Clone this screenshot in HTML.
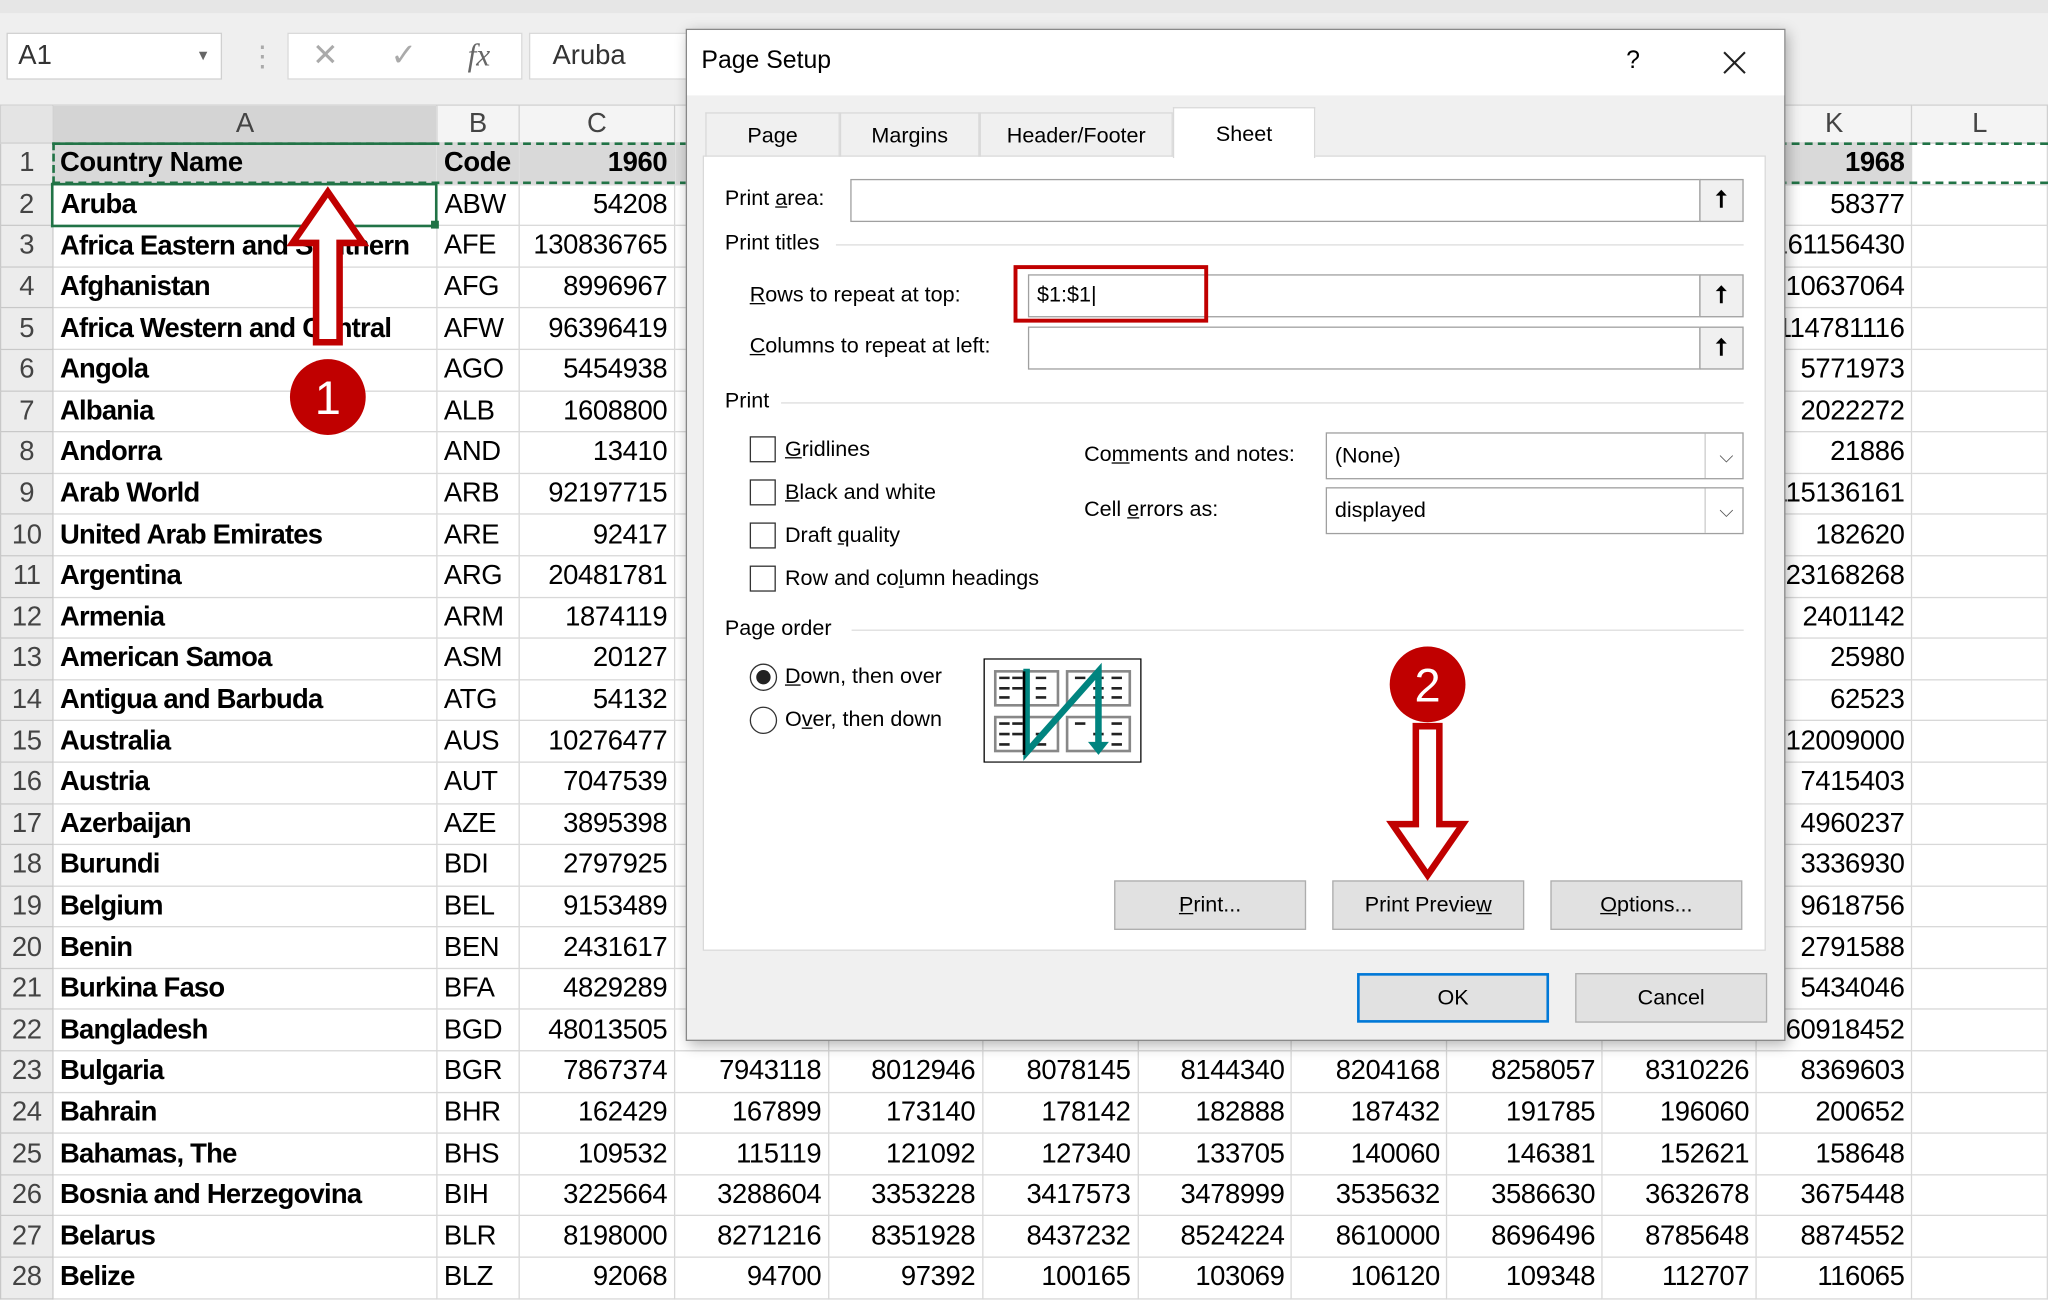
<!DOCTYPE html>
<html><head><meta charset="utf-8"><style>
*{box-sizing:border-box;margin:0;padding:0}
body{width:2048px;height:1305px;overflow:hidden;background:#fff;font-family:"Liberation Sans",sans-serif}
#w{position:absolute;left:0;top:0;width:1568px;height:999px;transform:scale(1.30612);transform-origin:0 0;overflow:hidden;background:#fff}
.a{position:absolute}
table{position:absolute;left:0;top:80px;border-collapse:collapse;table-layout:fixed;font-size:21px;color:#000;letter-spacing:-0.3px}
td{border:1px solid #d8d8d8;height:31.6px;padding:0 5px;white-space:nowrap;overflow:hidden}
td.r{text-align:right}
td.h{background:#ececec;color:#444;text-align:center;padding:0;border-color:#c8c8c8}
tr.ch td{height:29px;background:#f4f4f4;color:#444;text-align:center;font-size:21px;border-color:#d0d0d0}
td.n{font-weight:bold;overflow:visible;letter-spacing:-0.6px}
.d{font-family:"Liberation Sans",sans-serif;font-size:16.5px;color:#000}
.inp{position:absolute;background:#fff;border:1px solid #a0a0a0}
.ub{position:absolute;width:34px;background:#f0f0f0;border:1px solid #a0a0a0;text-align:center;font-weight:bold;font-size:18px}
.cb{position:absolute;left:574px;width:20px;height:20px;border:1px solid #333;background:#fff}
.btn{position:absolute;height:38px;width:147px;background:#e1e1e1;border:1px solid #adadad;text-align:center;line-height:36px}
.sel{position:absolute;left:1015px;width:320px;height:36px;background:#fff;border:1px solid #a0a0a0;padding-left:6px;line-height:34px}
.sel:after{content:"";position:absolute;right:0;top:0;width:28px;height:34px;border-left:1px solid #ccc}
.sec{position:absolute;left:555px;right:16px;height:1px}
u{text-decoration:underline}
</style></head><body><div id="w">
<div class="a" style="left:0;top:0;width:1568px;height:80px;background:#efefef"></div>
<div class="a" style="left:0;top:0;width:1568px;height:10px;background:#e6e6e6"></div>
<div class="a" style="left:5px;top:25px;width:165px;height:36px;background:#fff;border:1px solid #d0d0d0;font-size:21px;line-height:34px;padding-left:8px;color:#333">A1<span style="position:absolute;right:8px;font-size:11px;color:#666">▼</span></div>
<div class="a" style="left:190px;top:30px;color:#aaa;font-size:22px">⋮</div>
<div class="a" style="left:220px;top:25px;width:180px;height:36px;background:#fff;border:1px solid #d8d8d8;font-size:24px;line-height:34px;color:#aaa"><span style="position:absolute;left:18px">✕</span><span style="position:absolute;left:78px">✓</span><span style="position:absolute;left:137px;font-family:'Liberation Serif',serif;font-style:italic;color:#666">fx</span></div>
<div class="a" style="left:405px;top:25px;width:130px;height:36px;background:#fff;border:1px solid #d8d8d8;font-size:21px;line-height:34px;padding-left:17px;color:#333">Aruba</div>
<table>
<colgroup><col style="width:40px"><col style="width:294px"><col style="width:63px"><col style="width:119px"><col style="width:118px"><col style="width:118px"><col style="width:119px"><col style="width:118px"><col style="width:119px"><col style="width:119px"><col style="width:118px"><col style="width:119px"><col style="width:104px"></colgroup>
<tr class="ch"><td style="background:#e4e4e4"></td><td style="background:#d4d4d4;border-bottom:2px solid #217346">A</td><td>B</td><td>C</td><td>D</td><td>E</td><td>F</td><td>G</td><td>H</td><td>I</td><td>J</td><td>K</td><td>L</td></tr>
<tr style="background:#d9d9d9;font-weight:bold"><td class="h" style="font-weight:normal">1</td><td>Country Name</td><td>Code</td><td class="r">1960</td><td></td><td></td><td></td><td></td><td></td><td></td><td></td><td class="r">1968</td><td style="background:#fff"></td></tr>
<tr><td class="h">2</td><td class="n" style="border:2px solid #217346">Aruba</td><td>ABW</td><td class="r">54208</td><td></td><td></td><td></td><td></td><td></td><td></td><td></td><td class="r">58377</td><td></td></tr>
<tr><td class="h">3</td><td class="n">Africa Eastern and Southern</td><td>AFE</td><td class="r">130836765</td><td></td><td></td><td></td><td></td><td></td><td></td><td></td><td class="r">161156430</td><td></td></tr>
<tr><td class="h">4</td><td class="n">Afghanistan</td><td>AFG</td><td class="r">8996967</td><td></td><td></td><td></td><td></td><td></td><td></td><td></td><td class="r">10637064</td><td></td></tr>
<tr><td class="h">5</td><td class="n">Africa Western and Central</td><td>AFW</td><td class="r">96396419</td><td></td><td></td><td></td><td></td><td></td><td></td><td></td><td class="r">114781116</td><td></td></tr>
<tr><td class="h">6</td><td class="n">Angola</td><td>AGO</td><td class="r">5454938</td><td></td><td></td><td></td><td></td><td></td><td></td><td></td><td class="r">5771973</td><td></td></tr>
<tr><td class="h">7</td><td class="n">Albania</td><td>ALB</td><td class="r">1608800</td><td></td><td></td><td></td><td></td><td></td><td></td><td></td><td class="r">2022272</td><td></td></tr>
<tr><td class="h">8</td><td class="n">Andorra</td><td>AND</td><td class="r">13410</td><td></td><td></td><td></td><td></td><td></td><td></td><td></td><td class="r">21886</td><td></td></tr>
<tr><td class="h">9</td><td class="n">Arab World</td><td>ARB</td><td class="r">92197715</td><td></td><td></td><td></td><td></td><td></td><td></td><td></td><td class="r">115136161</td><td></td></tr>
<tr><td class="h">10</td><td class="n">United Arab Emirates</td><td>ARE</td><td class="r">92417</td><td></td><td></td><td></td><td></td><td></td><td></td><td></td><td class="r">182620</td><td></td></tr>
<tr><td class="h">11</td><td class="n">Argentina</td><td>ARG</td><td class="r">20481781</td><td></td><td></td><td></td><td></td><td></td><td></td><td></td><td class="r">23168268</td><td></td></tr>
<tr><td class="h">12</td><td class="n">Armenia</td><td>ARM</td><td class="r">1874119</td><td></td><td></td><td></td><td></td><td></td><td></td><td></td><td class="r">2401142</td><td></td></tr>
<tr><td class="h">13</td><td class="n">American Samoa</td><td>ASM</td><td class="r">20127</td><td></td><td></td><td></td><td></td><td></td><td></td><td></td><td class="r">25980</td><td></td></tr>
<tr><td class="h">14</td><td class="n">Antigua and Barbuda</td><td>ATG</td><td class="r">54132</td><td></td><td></td><td></td><td></td><td></td><td></td><td></td><td class="r">62523</td><td></td></tr>
<tr><td class="h">15</td><td class="n">Australia</td><td>AUS</td><td class="r">10276477</td><td></td><td></td><td></td><td></td><td></td><td></td><td></td><td class="r">12009000</td><td></td></tr>
<tr><td class="h">16</td><td class="n">Austria</td><td>AUT</td><td class="r">7047539</td><td></td><td></td><td></td><td></td><td></td><td></td><td></td><td class="r">7415403</td><td></td></tr>
<tr><td class="h">17</td><td class="n">Azerbaijan</td><td>AZE</td><td class="r">3895398</td><td></td><td></td><td></td><td></td><td></td><td></td><td></td><td class="r">4960237</td><td></td></tr>
<tr><td class="h">18</td><td class="n">Burundi</td><td>BDI</td><td class="r">2797925</td><td></td><td></td><td></td><td></td><td></td><td></td><td></td><td class="r">3336930</td><td></td></tr>
<tr><td class="h">19</td><td class="n">Belgium</td><td>BEL</td><td class="r">9153489</td><td></td><td></td><td></td><td></td><td></td><td></td><td></td><td class="r">9618756</td><td></td></tr>
<tr><td class="h">20</td><td class="n">Benin</td><td>BEN</td><td class="r">2431617</td><td></td><td></td><td></td><td></td><td></td><td></td><td></td><td class="r">2791588</td><td></td></tr>
<tr><td class="h">21</td><td class="n">Burkina Faso</td><td>BFA</td><td class="r">4829289</td><td></td><td></td><td></td><td></td><td></td><td></td><td></td><td class="r">5434046</td><td></td></tr>
<tr><td class="h">22</td><td class="n">Bangladesh</td><td>BGD</td><td class="r">48013505</td><td></td><td></td><td></td><td></td><td></td><td></td><td></td><td class="r">160918452</td><td></td></tr>
<tr><td class="h">23</td><td class="n">Bulgaria</td><td>BGR</td><td class="r">7867374</td><td class="r">7943118</td><td class="r">8012946</td><td class="r">8078145</td><td class="r">8144340</td><td class="r">8204168</td><td class="r">8258057</td><td class="r">8310226</td><td class="r">8369603</td><td></td></tr>
<tr><td class="h">24</td><td class="n">Bahrain</td><td>BHR</td><td class="r">162429</td><td class="r">167899</td><td class="r">173140</td><td class="r">178142</td><td class="r">182888</td><td class="r">187432</td><td class="r">191785</td><td class="r">196060</td><td class="r">200652</td><td></td></tr>
<tr><td class="h">25</td><td class="n">Bahamas, The</td><td>BHS</td><td class="r">109532</td><td class="r">115119</td><td class="r">121092</td><td class="r">127340</td><td class="r">133705</td><td class="r">140060</td><td class="r">146381</td><td class="r">152621</td><td class="r">158648</td><td></td></tr>
<tr><td class="h">26</td><td class="n">Bosnia and Herzegovina</td><td>BIH</td><td class="r">3225664</td><td class="r">3288604</td><td class="r">3353228</td><td class="r">3417573</td><td class="r">3478999</td><td class="r">3535632</td><td class="r">3586630</td><td class="r">3632678</td><td class="r">3675448</td><td></td></tr>
<tr><td class="h">27</td><td class="n">Belarus</td><td>BLR</td><td class="r">8198000</td><td class="r">8271216</td><td class="r">8351928</td><td class="r">8437232</td><td class="r">8524224</td><td class="r">8610000</td><td class="r">8696496</td><td class="r">8785648</td><td class="r">8874552</td><td></td></tr>
<tr><td class="h">28</td><td class="n">Belize</td><td>BLZ</td><td class="r">92068</td><td class="r">94700</td><td class="r">97392</td><td class="r">100165</td><td class="r">103069</td><td class="r">106120</td><td class="r">109348</td><td class="r">112707</td><td class="r">116065</td><td></td></tr>
</table>
<div class="a" style="left:40px;top:109px;width:1528px;height:32px;border-top:2px dashed #217346;border-bottom:2px dashed #217346;border-left:2px dashed #217346"></div>
<div class="a" style="left:330px;top:169px;width:6px;height:6px;background:#217346"></div>

<div class="a d" style="left:525px;top:22px;width:842px;height:775px;background:#f0f0f0;border:1px solid #888;box-shadow:2px 3px 10px rgba(0,0,0,.3)">
 <div class="a" style="left:0;top:0;width:840px;height:50px;background:#fff"></div>
 <div class="a" style="left:11px;top:13px;font-size:19px">Page Setup</div>
 <div class="a" style="left:719px;top:13px;font-size:19px">?</div>
 <svg class="a" style="left:792px;top:15px" width="20" height="20"><path d="M2 2L18 18M18 2L2 18" stroke="#222" stroke-width="1.6"/></svg>
</div>
<div class="a d" style="left:538px;top:119px;width:814px;height:609px;background:#fff;border:1px solid #d9d9d9"></div>
<div class="a d" style="left:540px;top:86px;width:103px;height:34px;border:1px solid #d9d9d9;border-bottom:none;text-align:center;line-height:34px">Page</div>
<div class="a d" style="left:643px;top:86px;width:107px;height:34px;border:1px solid #d9d9d9;border-bottom:none;text-align:center;line-height:34px">Margins</div>
<div class="a d" style="left:750px;top:86px;width:148px;height:34px;border:1px solid #d9d9d9;border-bottom:none;text-align:center;line-height:34px">Header/Footer</div>
<div class="a d" style="left:898px;top:82px;width:109px;height:39px;background:#fff;border:1px solid #d9d9d9;border-bottom:none;text-align:center;line-height:40px">Sheet</div>

<div class="a d" style="left:555px;top:143px">Print <u>a</u>rea:</div>
<div class="inp" style="left:651px;top:137px;width:651px;height:33px"></div>
<div class="ub" style="left:1301px;top:137px;height:33px;line-height:31px">⭡</div>
<div class="a d" style="left:555px;top:177px">Print titles</div>
<div class="sec" style="left:640px;width:695px;top:187px;background:#ddd"></div>
<div class="a d" style="left:574px;top:217px"><u>R</u>ows to repeat at top:</div>
<div class="inp" style="left:787px;top:210px;width:515px;height:33px;padding-left:6px;line-height:31px" ><span class="d">$1:$1|</span></div>
<div class="ub" style="left:1301px;top:210px;height:33px;line-height:31px">⭡</div>
<div class="a" style="left:776px;top:203px;width:149px;height:44px;border:3px solid #c00000"></div>
<div class="a d" style="left:574px;top:256px"><u>C</u>olumns to repeat at left:</div>
<div class="inp" style="left:787px;top:250px;width:515px;height:33px"></div>
<div class="ub" style="left:1301px;top:250px;height:33px;line-height:31px">⭡</div>
<div class="a d" style="left:555px;top:298px">Print</div>
<div class="sec" style="left:598px;width:737px;top:308px;background:#ddd"></div>
<div class="cb" style="top:334px"></div><div class="a d" style="left:601px;top:335px"><u>G</u>ridlines</div>
<div class="cb" style="top:367px"></div><div class="a d" style="left:601px;top:368px"><u>B</u>lack and white</div>
<div class="cb" style="top:400px"></div><div class="a d" style="left:601px;top:401px">Draft <u>q</u>uality</div>
<div class="cb" style="top:433px"></div><div class="a d" style="left:601px;top:434px">Row and co<u>l</u>umn headings</div>
<div class="a d" style="left:830px;top:339px">Co<u>m</u>ments and notes:</div>
<div class="sel d" style="top:331px">(None)<span style="position:absolute;right:7px;top:0;color:#555;font-size:14px">⌵</span></div>
<div class="a d" style="left:830px;top:381px">Cell <u>e</u>rrors as:</div>
<div class="sel d" style="top:373px">displayed<span style="position:absolute;right:7px;top:0;color:#555;font-size:14px">⌵</span></div>
<div class="a d" style="left:555px;top:472px">Page order</div>
<div class="sec" style="left:652px;width:683px;top:482px;background:#ddd"></div>
<div class="a" style="left:574px;top:508px;width:21px;height:21px;border:1px solid #333;border-radius:50%;background:#fff"><div style="margin:4px;width:11px;height:11px;border-radius:50%;background:#222"></div></div>
<div class="a d" style="left:601px;top:509px"><u>D</u>own, then over</div>
<div class="a" style="left:574px;top:541px;width:21px;height:21px;border:1px solid #333;border-radius:50%;background:#fff"></div>
<div class="a d" style="left:601px;top:542px">O<u>v</u>er, then down</div>
<svg class="a" style="left:753px;top:504px" width="121" height="80" viewBox="0 0 121 80">
<rect x="0.5" y="0.5" width="120" height="79" fill="#fff" stroke="#000"/>
<g fill="#fff" stroke="#888" stroke-width="2"><rect x="9" y="10" width="48" height="26"/><rect x="64" y="10" width="48" height="26"/><rect x="9" y="45" width="48" height="26"/><rect x="64" y="45" width="48" height="26"/></g>
<g stroke="#222" stroke-width="2"><path d="M12 15h8M22 15h8M40 15h8M12 23h8M22 23h8M40 23h8M12 30h8M40 30h8M70 15h8M84 15h8M98 15h8M84 23h8M98 23h8M84 30h8M98 30h8M12 50h8M22 50h8M12 58h8M22 58h8M40 58h8M12 66h8M40 66h8M70 50h8M84 58h8M98 50h8M98 58h8M98 66h8"/></g>
<path d="M33 8V72L88 10V70" fill="none" stroke="#00847f" stroke-width="5"/>
<path d="M80 64l8 10 8-10z" fill="#00847f"/>
<path d="M31 10V74" stroke="#000" stroke-width="2"/>
</svg>
<div class="btn d" style="left:853px;top:674px"><u>P</u>rint...</div>
<div class="btn d" style="left:1020px;top:674px">Print Previe<u>w</u></div>
<div class="btn d" style="left:1187px;top:674px"><u>O</u>ptions...</div>
<div class="btn d" style="left:1039px;top:745px;border:2px solid #0078d7;line-height:34px">OK</div>
<div class="btn d" style="left:1206px;top:745px">Cancel</div>

<svg class="a" style="left:0;top:0" width="1568" height="999">
<path d="M251 147L278 186H260V262H242V186H224Z" fill="#fff" stroke="#c00000" stroke-width="5" stroke-linejoin="miter"/>
<circle cx="251" cy="304" r="29" fill="#c00000"/>
<text x="251" y="317" text-anchor="middle" font-family="Liberation Sans" font-size="36" fill="#fff">1</text>
<path d="M1093 670L1120 631H1102V556H1084V631H1066Z" fill="#fff" stroke="#c00000" stroke-width="5"/>
<circle cx="1093" cy="524" r="29" fill="#c00000"/>
<text x="1093" y="537" text-anchor="middle" font-family="Liberation Sans" font-size="36" fill="#fff">2</text>
</svg>
</div></body></html>
